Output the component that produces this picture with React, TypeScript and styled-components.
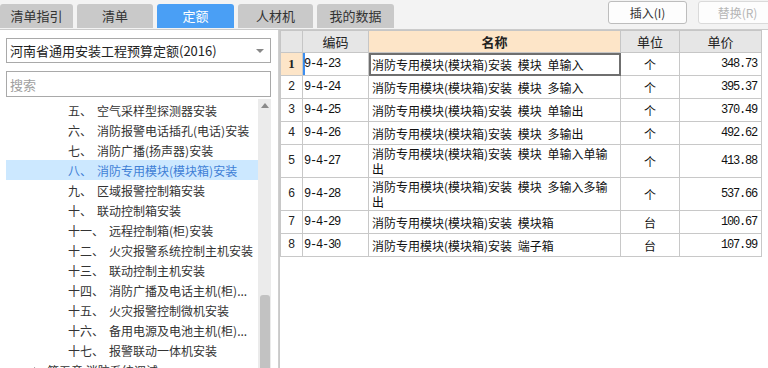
import * as React from "react";
import styled, { createGlobalStyle } from "styled-components";

const GlobalStyle = createGlobalStyle`
  body {
    margin: 0;
    background: #fff;
    font-family: "Noto Sans CJK SC", "Noto Sans", sans-serif;
    color: #333;
  }
`;

const Page = styled.div`
  width: 768px;
  height: 368px;
  overflow: hidden;
  display: flex;
  flex-direction: column;
`;

const TopBar = styled.div`
  height: 29px;
  flex: none;
  display: flex;
  background: #f3f3f3;
  border-bottom: 1px solid #cbcbcb;
  overflow: hidden;
`;

const Tabs = styled.div`
  display: flex;
  gap: 4px;
  padding-top: 4px;
`;

const Tab = styled.div<{ $active?: boolean; $w: number }>`
  width: ${(p) => p.$w}px;
  height: 24px;
  border-radius: 3px 3px 0 0;
  background: ${(p) => (p.$active ? "#4a9ff5" : "#c9c9c9")};
  color: ${(p) => (p.$active ? "#fff" : "#333")};
  font-size: 13px;
  line-height: 24px;
  text-align: center;
`;

const Buttons = styled.div`
  margin-left: auto;
  margin-right: -9px;
  display: flex;
  gap: 11px;
  padding-top: 1px;
`;

const ToolButton = styled.div<{ $disabled?: boolean }>`
  width: 77px;
  height: 21px;
  border: 1px solid ${(p) => (p.$disabled ? "#dadada" : "#bdbdbd")};
  border-radius: 3px;
  background: #fdfdfd;
  color: ${(p) => (p.$disabled ? "#b5b5b5" : "#333")};
  font-size: 12px;
  line-height: 21px;
  text-align: center;
`;

const Body = styled.div`
  flex: 1;
  display: flex;
  min-height: 0;
`;

const LeftPanel = styled.div`
  width: 279px;
  flex: none;
  border-right: 1px solid #cfcfcf;
  padding: 8px 7px 0 6px;
  box-sizing: border-box;
  display: flex;
  flex-direction: column;
  gap: 8px;
`;

const Select = styled.div`
  height: 25px;
  border: 1px solid #a9a9a9;
  box-sizing: border-box;
  display: flex;
  align-items: center;
  padding: 0 6px 0 3px;
  font-size: 13px;
  color: #222;
`;

const Caret = styled.span`
  margin-left: auto;
  width: 0;
  height: 0;
  border-left: 4px solid transparent;
  border-right: 4px solid transparent;
  border-top: 4px solid #888;
`;

const Search = styled.div`
  height: 26px;
  border: 1px solid #a9a9a9;
  box-sizing: border-box;
  display: flex;
  align-items: center;
  padding-left: 3px;
  font-size: 13px;
  color: #a0a0a0;
  margin-bottom: -6px;
`;

const Tree = styled.div`
  flex: 1;
  display: flex;
  min-height: 0;
`;

const TreeList = styled.div`
  flex: 1;
  padding-top: 1px;
  overflow: hidden;
`;

const TreeRow = styled.div<{ $active?: boolean; $indent: number }>`
  height: 20px;
  display: flex;
  align-items: center;
  padding-left: ${(p) => p.$indent}px;
  background: ${(p) => (p.$active ? "#cce8ff" : "transparent")};
  color: ${(p) => (p.$active ? "#3f7fd6" : "#333")};
  font-size: 12px;
  white-space: nowrap;
`;

const Num = styled.span`
  margin-right: 5px;
`;

const Expander = styled.svg`
  margin-right: 7px;
`;

const ScrollBar = styled.div`
  width: 13px;
  flex: none;
  background: #ebebeb;
  display: flex;
  flex-direction: column;
  align-items: center;
`;

const UpArrow = styled.div`
  margin-top: 4px;
  width: 0;
  height: 0;
  border-left: 4px solid transparent;
  border-right: 4px solid transparent;
  border-bottom: 5px solid #8a8a8a;
`;

const Thumb = styled.div`
  margin-top: auto;
  width: 10px;
  height: 73px;
  border-radius: 3px 3px 0 0;
  background: #c2c2c2;
`;

const Grid = styled.div`
  flex: 1;
  overflow: hidden;
  border-left: 1px solid #c9c9c9;
`;

const Table = styled.table`
  border-collapse: collapse;
  table-layout: fixed;
  width: 481px;
`;

const Th = styled.th<{ $active?: boolean }>`
  height: 21px;
  padding: 0;
  border: 1px solid #c6c6c6;
  background: ${(p) => (p.$active ? "#fde5c8" : "#e6e6e6")};
  font-size: 13px;
  font-weight: ${(p) => (p.$active ? 700 : 400)};
  color: #222;
`;

const Td = styled.td<{
  $align?: "left" | "center" | "right";
  $mono?: boolean;
  $focus?: boolean;
  $marker?: boolean;
}>`
  height: 22px;
  padding: 0 ${(p) => (p.$align === "right" ? 4 : 3)}px 0
    ${(p) => (p.$mono ? 1 : 3)}px;
  border: 1px solid #c8c8c8;
  text-align: ${(p) => p.$align || "left"};
  font-family: ${(p) =>
    p.$mono ? '"Liberation Mono", monospace' : '"Noto Sans CJK SC", sans-serif'};
  font-size: 12px;
  letter-spacing: ${(p) => (p.$mono ? "-1.2px" : "0")};
  line-height: 15px;
  color: #111;
  vertical-align: middle;
  outline: ${(p) => (p.$focus ? "2px solid #6f6f6f" : "none")};
  outline-offset: -2px;
  box-shadow: ${(p) => (p.$marker ? "inset 2px 0 0 #3d8ef0" : "none")};
`;

const NameText = styled.div`
  max-width: 238px;
  word-spacing: 3px;
`;

const RowNo = styled.td<{ $current?: boolean }>`
  padding: 0;
  border: 1px solid #c8c8c8;
  text-align: center;
  background: ${(p) => (p.$current ? "#fde5c8" : "#fff")};
  font-family: ${(p) =>
    p.$current ? '"Liberation Serif", serif' : '"Liberation Mono", monospace'};
  font-weight: ${(p) => (p.$current ? 700 : 400)};
  font-size: ${(p) => (p.$current ? 13 : 12)}px;
  color: #222;
`;

const tabs = [
  { label: "清单指引", w: 73 },
  { label: "清单", w: 76 },
  { label: "定额", w: 77, active: true },
  { label: "人材机", w: 75 },
  { label: "我的数据", w: 77 },
];

const treeItems = [
  { num: "五、", name: "空气采样型探测器安装" },
  { num: "六、", name: "消防报警电话插孔(电话)安装" },
  { num: "七、", name: "消防广播(扬声器)安装" },
  { num: "八、", name: "消防专用模块(模块箱)安装", active: true },
  { num: "九、", name: "区域报警控制箱安装" },
  { num: "十、", name: "联动控制箱安装" },
  { num: "十一、", name: "远程控制箱(柜)安装" },
  { num: "十二、", name: "火灾报警系统控制主机安装" },
  { num: "十三、", name: "联动控制主机安装" },
  { num: "十四、", name: "消防广播及电话主机(柜)..." },
  { num: "十五、", name: "火灾报警控制微机安装" },
  { num: "十六、", name: "备用电源及电池主机(柜)..." },
  { num: "十七、", name: "报警联动一体机安装" },
];

const rows = [
  { code: "9-4-23", name: "消防专用模块(模块箱)安装 模块 单输入", unit: "个", price: "348.73" },
  { code: "9-4-24", name: "消防专用模块(模块箱)安装 模块 多输入", unit: "个", price: "395.37" },
  { code: "9-4-25", name: "消防专用模块(模块箱)安装 模块 单输出", unit: "个", price: "370.49" },
  { code: "9-4-26", name: "消防专用模块(模块箱)安装 模块 多输出", unit: "个", price: "492.62" },
  { code: "9-4-27", name: "消防专用模块(模块箱)安装 模块 单输入单输出", unit: "个", price: "413.88", tall: true },
  { code: "9-4-28", name: "消防专用模块(模块箱)安装 模块 多输入多输出", unit: "个", price: "537.66", tall: true },
  { code: "9-4-29", name: "消防专用模块(模块箱)安装 模块箱", unit: "台", price: "100.67" },
  { code: "9-4-30", name: "消防专用模块(模块箱)安装 端子箱", unit: "台", price: "107.99" },
];

export default function App() {
  return (
    <Page>
      <GlobalStyle />
      <TopBar>
        <Tabs>
          {tabs.map((t) => (
            <Tab key={t.label} $w={t.w} $active={t.active}>
              {t.label}
            </Tab>
          ))}
        </Tabs>
        <Buttons>
          <ToolButton>插入(I)</ToolButton>
          <ToolButton $disabled>替换(R)</ToolButton>
        </Buttons>
      </TopBar>
      <Body>
        <LeftPanel>
          <Select>
            河南省通用安装工程预算定额(2016)
            <Caret />
          </Select>
          <Search>搜索</Search>
          <Tree>
            <TreeList>
              {treeItems.map((it) => (
                <TreeRow key={it.num} $indent={62} $active={it.active}>
                  <Num>{it.num}</Num>
                  {it.name}
                </TreeRow>
              ))}
              <TreeRow $indent={26}>
                <Expander width="8" height="8" viewBox="0 0 8 8">
                  <path d="M2 1 L6 4 L2 7 Z" fill="#777" />
                </Expander>
                第五章 消防系统调试
              </TreeRow>
            </TreeList>
            <ScrollBar>
              <UpArrow />
              <Thumb />
            </ScrollBar>
          </Tree>
        </LeftPanel>
        <Grid>
          <Table>
            <colgroup>
              <col style={{ width: 22 }} />
              <col style={{ width: 66 }} />
              <col style={{ width: 252 }} />
              <col style={{ width: 59 }} />
              <col style={{ width: 82 }} />
            </colgroup>
            <thead>
              <tr>
                <Th />
                <Th>编码</Th>
                <Th $active>名称</Th>
                <Th>单位</Th>
                <Th>单价</Th>
              </tr>
            </thead>
            <tbody>
              {rows.map((r, i) => (
                <tr key={r.code} style={r.tall ? { height: 33 } : undefined}>
                  <RowNo $current={i === 0}>{i + 1}</RowNo>
                  <Td $mono $marker={i === 0}>
                    {r.code}
                  </Td>
                  <Td $focus={i === 0}>
                    <NameText>{r.name}</NameText>
                  </Td>
                  <Td $align="center">{r.unit}</Td>
                  <Td $align="right" $mono>
                    {r.price}
                  </Td>
                </tr>
              ))}
            </tbody>
          </Table>
        </Grid>
      </Body>
    </Page>
  );
}
